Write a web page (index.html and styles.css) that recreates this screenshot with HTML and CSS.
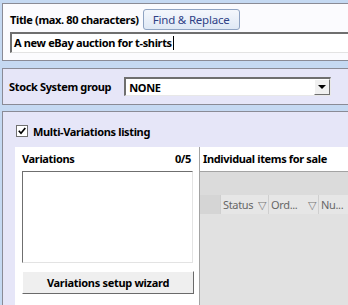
FILE: index.html
```html
<!DOCTYPE html>
<html lang="en">
<head>
  <meta charset="UTF-8">
  <title>Listing editor</title>
  <link rel="stylesheet" href="styles.css">
</head>
<body>

  <div class="panel title-panel">
    <div class="title-row">
      <span class="label">Title (max. 80 characters)</span>
      <button class="find-btn">Find &amp; Replace</button>
    </div>
    <div class="text-input">A new eBay auction for t-shirts<span class="caret"></span></div>
  </div>

  <div class="panel stock-panel">
    <span class="label">Stock System group</span>
    <div class="select">
      <span>NONE</span>
      <span class="drop-btn"><span class="arrow"></span></span>
    </div>
  </div>

  <div class="panel variations-panel">
    <label class="check-row">
      <span class="checkbox">
        <svg width="8" height="8" viewBox="0 0 8 8"><path d="M0.8 3.8 L3 6.3 L7.3 1" fill="none" stroke="#000" stroke-width="1.7"/></svg>
      </span>
      <span class="label">Multi-Variations listing</span>
    </label>

    <div class="var-area">
      <div class="var-left">
        <div class="col-head">
          <span class="label">Variations</span>
          <span class="label">0/5</span>
        </div>
        <div class="listbox"></div>
        <button class="wizard-btn">Variations setup wizard</button>
      </div>

      <div class="var-right">
        <div class="col-head">
          <span class="label">Individual items for sale</span>
        </div>
        <div class="grid">
          <div class="grid-band"></div>
          <div class="grid-header">
            <div class="cell row-head"></div>
            <div class="cell col-status">Status <span class="filter">▽</span></div>
            <div class="cell col-ord">Ord... <span class="filter">▽</span></div>
            <div class="cell col-num">Nu...</div>
          </div>
        </div>
      </div>
    </div>
  </div>

</body>
</html>
```

FILE: styles.css
```css
body {
  margin: 0;
  padding: 3px 0 0 2px;
  background: #c5d9f2;
  font-family: "Noto Sans", "Open Sans", sans-serif;
  font-size: 11px;
  letter-spacing: -0.35px;
  height: 302px;
  overflow: hidden;
}

.label {
  font-weight: bold;
  color: #000;
  white-space: nowrap;
}

/* panels run off the right edge, so no right border */
.panel {
  border: 1px solid #8a8b96;
  border-right: none;
  box-sizing: border-box;
}

.title-panel {
  height: 58px;
  background: #fbfbfe;
  padding: 5px 0 0 7px;
}

.title-row {
  display: flex;
  align-items: center;
  height: 21px;
}

.find-btn {
  margin-left: 4px;
  width: 97px;
  height: 21px;
  padding: 0;
  font-family: inherit;
  font-size: 11.5px;
  letter-spacing: -0.2px;
  color: #2f4186;
  background: linear-gradient(#f4f7fc, #dfe8f5);
  border: 1px solid #8fa3c2;
  border-radius: 3px;
}

.text-input {
  margin-top: 2px;
  height: 21px;
  box-sizing: border-box;
  padding: 1px 0 0 2px;
  font-weight: bold;
  font-size: 11px;
  background: #fff;
  border-top: 2px solid #6f6f6f;
  border-left: 2px solid #6f6f6f;
  border-bottom: 1px solid #e3e3e3;
}

.caret {
  display: inline-block;
  width: 1px;
  height: 14px;
  margin-left: 1px;
  background: #000;
  vertical-align: -3px;
}

.stock-panel {
  margin-top: 7px;
  height: 37px;
  background: #e6e6f8;
  display: flex;
  align-items: center;
  padding-left: 6px;
}

.select {
  margin-left: 13px;
  width: 207px;
  height: 19px;
  box-sizing: border-box;
  background: #fff;
  border-top: 2px solid #6f6f6f;
  border-left: 2px solid #6f6f6f;
  border-bottom: 1px solid #e8e8e8;
  border-right: 1px solid #e8e8e8;
  display: flex;
  align-items: center;
  justify-content: space-between;
  padding-left: 3px;
  font-weight: bold;
}

.drop-btn {
  width: 16px;
  height: 16px;
  box-sizing: border-box;
  background: #f0f0f0;
  border: 1px solid;
  border-color: #fff #6f6f6f #6f6f6f #fff;
  display: flex;
  align-items: center;
  justify-content: center;
}

.arrow {
  width: 0;
  height: 0;
  border-left: 4px solid transparent;
  border-right: 4px solid transparent;
  border-top: 4px solid #000;
}

.variations-panel {
  margin-top: 6px;
  height: 196px;
  border-bottom: none;
  background: #e6e6f8;
  padding: 12px 0 0 12px;
}

.check-row {
  display: flex;
  align-items: center;
  height: 14px;
}

.checkbox {
  width: 12px;
  height: 12px;
  margin-left: 1px;
  box-sizing: border-box;
  background: #fff;
  border: 1px solid #707070;
  display: flex;
  align-items: center;
  justify-content: center;
  margin-right: 5px;
}

.var-area {
  margin-top: 9px;
  display: flex;
  background: #fff;
  height: 160px;
}

.var-left {
  width: 185px;
  border-right: 1px solid #a3a3a3;
  padding: 0 6px 0 7px;
  box-sizing: border-box;
}

.col-head {
  height: 23px;
  padding-bottom: 1px;
  display: flex;
  align-items: center;
  justify-content: space-between;
  padding-right: 2px;
}

.listbox {
  height: 92px;
  background: #fff;
  border: 1px solid;
  border-color: #6f6f6f #e3e3e3 #e3e3e3 #6f6f6f;
  box-sizing: border-box;
}

.wizard-btn {
  margin-top: 8px;
  width: 172px;
  height: 23px;
  padding: 0;
  font-family: inherit;
  font-size: 11px;
  letter-spacing: -0.3px;
  font-weight: bold;
  background: #efefef;
  border: 1px solid;
  border-color: #fff #6a6a6a #6a6a6a #fff;
}

.var-right {
  flex: 1;
}

.var-right .col-head {
  padding-left: 3px;
}

.grid {
  height: 136px;
  border-top: 1px solid #a3a3a3;
  background: #e1e1e1;
}

.grid-band {
  height: 23px;
  background: #dbdbdb;
}

.grid-header {
  display: flex;
  height: 19px;
  color: #666;
}

.cell {
  background: #e6e6e6;
  border-right: 1px solid #cfcfcf;
  box-sizing: border-box;
  display: flex;
  align-items: center;
  padding-left: 2px;
  white-space: nowrap;
}

.row-head {
  width: 21px;
  background: #d5d5d5;
}

.col-status,
.col-ord {
  width: 48px;
  justify-content: space-between;
  padding-right: 2px;
}

.col-ord {
  width: 50px;
}

.col-num {
  width: 40px;
}

.filter {
  font-size: 11px;
  color: #777;
}
```
